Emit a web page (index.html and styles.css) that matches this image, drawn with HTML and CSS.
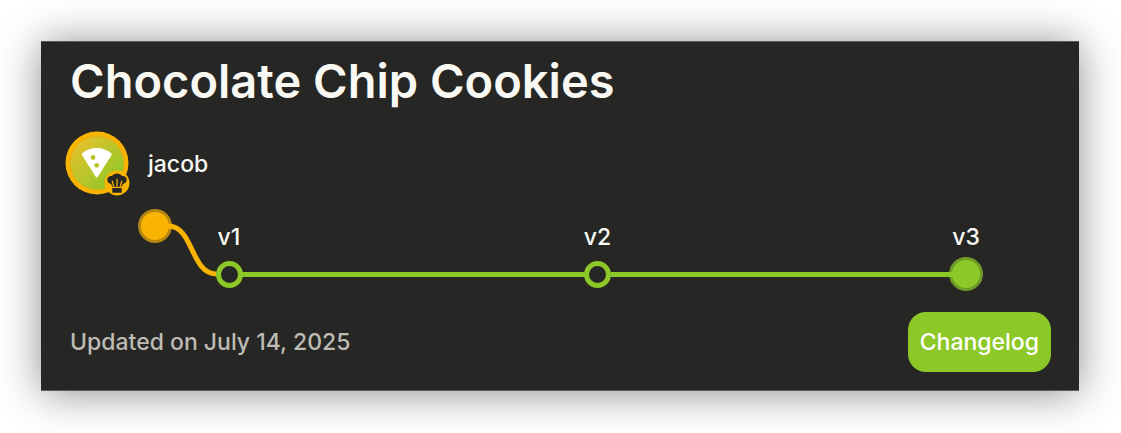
FILE: index.html
```html
<!DOCTYPE html>
<html lang="en">
<head>
<meta charset="utf-8">
<meta name="viewport" content="width=device-width, initial-scale=1">
<title>Chocolate Chip Cookies</title>
<link rel="stylesheet" href="styles.css">
</head>
<body>
<main class="card">
  <h1 class="title">Chocolate Chip Cookies</h1>
  <div class="author">
    <svg class="avatar" viewBox="0 0 66 66" aria-hidden="true">
      <defs>
        <linearGradient id="avatar-fill" x1="0" y1="0" x2="1" y2="1">
          <stop offset="0.1" stop-color="#e8c02c"/>
          <stop offset="0.9" stop-color="#8cc928"/>
        </linearGradient>
      </defs>
      <circle cx="32" cy="32" r="31.500" fill="#f8b400"/>
      <circle cx="32" cy="32" r="26.800" fill="url(#avatar-fill)" stroke="#d9aa14" stroke-width="0.600"/>
      <path d="M17.200 22.200Q31.500 12 46.300 22.200Q47 23 46.500 24L33 45.500Q31.700 47.200 30.500 45.500L17 24Q16.400 23 17.200 22.200Z" fill="#fff"/>
      <circle cx="28" cy="26.500" r="2.400" fill="#b9c42a"/>
      <circle cx="31.700" cy="34.300" r="2.400" fill="#b9c42a"/>
      <circle cx="52" cy="52" r="12.500" fill="#f8b400"/>
      <path d="M47.500 56L46 53Q42.300 52 42.300 48.500Q42.700 44.800 46.800 45Q48.500 42.400 52 42.400Q55.500 42.400 57.200 45Q61.300 44.800 61.700 48.500Q61.700 52 58 53L56.500 56Z" fill="#262624"/>
      <path d="M49 56.500L47.200 50M52 56.500V48M55 56.500L56.800 50" fill="none" stroke="#f8b400" stroke-width="1.200" stroke-linecap="round"/>
      <rect x="47.300" y="57" width="9.400" height="4.800" rx="0.500" fill="#262624"/>
    </svg>
    <span class="name">jacob</span>
  </div>
  <div class="history">
    <svg class="origin" viewBox="0 0 78 82" aria-hidden="true">
      <circle cx="17" cy="17" r="17" fill="#b68813"/>
      <path d="M30 17C56 17 52 65 79 65" fill="none" stroke="#f8b400" stroke-width="5"/>
      <circle cx="17" cy="17" r="14" fill="#f8b400"/>
    </svg>
    <div class="versions">
      <span class="label">v1</span>
      <span></span>
      <span class="label">v2</span>
      <span></span>
      <span class="label">v3</span>
      <span class="node"></span>
      <span class="line"></span>
      <span class="node"></span>
      <span class="line"></span>
      <span class="node current"></span>
    </div>
  </div>
  <footer class="footer">
    <span class="updated">Updated on July 14, 2025</span>
    <button class="changelog" type="button">Changelog</button>
  </footer>
</main>
</body>
</html>
```
FILE: styles.css
```css
* {
  box-sizing: border-box;
}

body {
  margin: 0;
  padding: 41px 42px 41px 41px;
  background: #fff;
  color: #f9f8f2;
  font-family: Inter, "Liberation Sans", sans-serif;
  font-size: 23px;
  font-weight: 500;
  line-height: 32px;
}

.card {
  padding: 7px 28px 18px 24px;
  background: #262624;
  border-top: 1px solid #5c5c5a;
  border-bottom: 1px solid #5c5c5a;
  box-shadow: 0 2px 40px rgba(0, 0, 0, 0.45);
}

.title {
  margin: 0 0 18px 5px;
  font-size: 47px;
  font-weight: 600;
  line-height: 64px;
}

.author {
  display: flex;
  align-items: center;
  gap: 17px;
}

.avatar {
  width: 66px;
  height: 66px;
}

.history {
  display: flex;
  margin: 12px 68px 21px 73px;
}

.origin {
  flex: none;
  width: 78px;
  height: 82px;
  margin-right: -4px;
}

.versions {
  flex: 1;
  display: grid;
  grid-template-columns: 34px 1fr 34px 1fr 34px;
  grid-template-rows: 32px 34px;
  align-content: end;
  align-items: center;
  justify-items: center;
  row-gap: 4px;
}

.node {
  width: 27px;
  height: 27px;
  border: 5px solid #8cc928;
  border-radius: 50%;
}

.current {
  width: 34px;
  height: 34px;
  border: 3px solid #6e9a28;
  background: #8cc928;
}

.line {
  z-index: 1;
  justify-self: stretch;
  height: 5px;
  margin: 0 -4px;
  background: #8cc928;
}

.footer {
  display: flex;
  align-items: center;
  justify-content: space-between;
  padding-left: 5px;
}

.updated {
  color: #bdbcb4;
}

.changelog {
  padding: 14px 12px;
  border: 0;
  border-radius: 18px;
  background: #8cc928;
  color: #fff;
  font: inherit;
}
```
